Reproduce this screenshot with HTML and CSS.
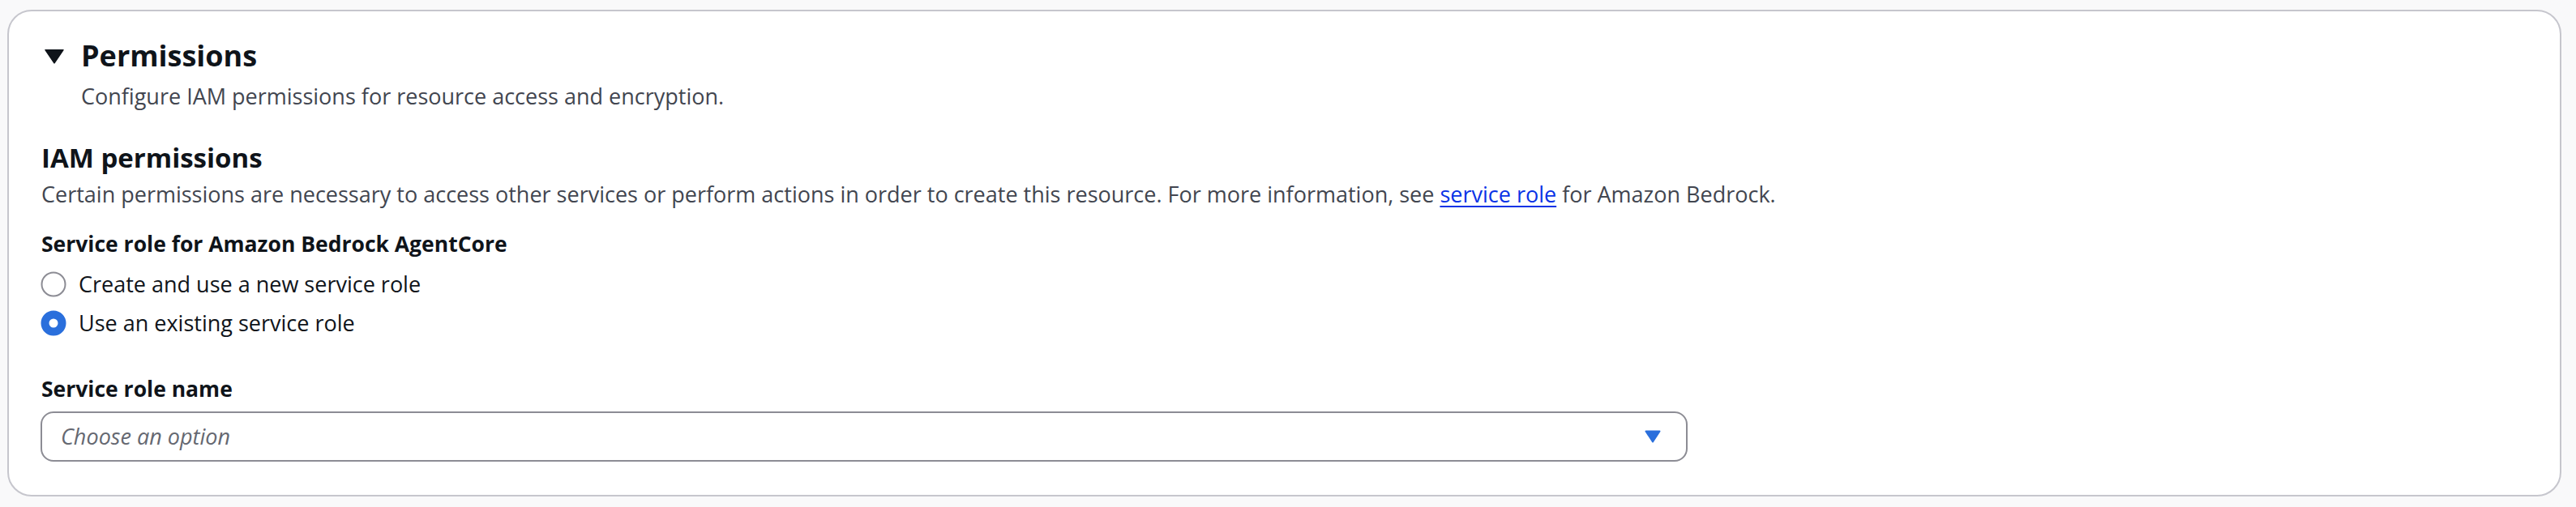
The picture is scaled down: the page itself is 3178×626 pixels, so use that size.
FILE: index.html
```html
<!DOCTYPE html>
<html lang="en">
<head>
<meta charset="utf-8">
<title>Permissions</title>
<link rel="stylesheet" href="styles.css">
</head>
<body>
  <section class="container">
    <div class="header">
      <div class="header-row">
        <span class="expand-icon">
          <svg width="32" height="32" viewBox="0 0 32 32" aria-hidden="true">
            <path d="M5 13 H27 L16 31 Z" transform="translate(0,-3) scale(1,0.9)" fill="#0f141a" stroke="#0f141a" stroke-width="1.5" stroke-linejoin="round"/>
          </svg>
        </span>
        <h2 class="header-title">Permissions</h2>
      </div>
      <p class="header-desc">Configure IAM permissions for resource access and encryption.</p>
    </div>

    <div class="content">
      <h3 class="section-title">IAM permissions</h3>
      <p class="section-desc">Certain permissions are necessary to access other services or perform actions in order to create this resource. For more information, see <a class="link" href="#">service role</a> for Amazon Bedrock.</p>

      <div class="field field-radio">
        <div class="field-label">Service role for Amazon Bedrock AgentCore</div>
        <div class="radio-group">
          <label class="radio">
            <span class="radio-control">
              <svg width="32" height="32" viewBox="0 0 32 32" aria-hidden="true">
                <circle cx="16" cy="16" r="14.5" fill="#ffffff" stroke="#8c8c94" stroke-width="2"/>
              </svg>
            </span>
            <span class="radio-label">Create and use a new service role</span>
          </label>
          <label class="radio">
            <span class="radio-control">
              <svg width="32" height="32" viewBox="0 0 32 32" aria-hidden="true">
                <circle cx="16" cy="16" r="10.5" fill="#ffffff" stroke="#2a6fdc" stroke-width="10"/>
              </svg>
            </span>
            <span class="radio-label">Use an existing service role</span>
          </label>
        </div>
      </div>

      <div class="field field-select">
        <div class="field-label">Service role name</div>
        <div class="select">
          <span class="select-placeholder">Choose an option</span>
          <svg class="select-caret" width="20" height="16" viewBox="0 0 20 16" aria-hidden="true">
            <path d="M1.5 1.5 H18.5 L10 14.5 Z" fill="#2a6fdc" stroke="#2a6fdc" stroke-width="2" stroke-linejoin="round"/>
          </svg>
        </div>
      </div>
    </div>
  </section>
</body>
</html>
```

FILE: styles.css
```css
* {
  box-sizing: border-box;
}

html,
body {
  margin: 0;
  background: #f9f9fa;
}

body {
  padding: 12px 18px 13px 9px;
  font-family: "Open Sans", "Noto Sans", sans-serif;
  color: #0f141a;
}

/* Outer container card */
.container {
  background: #ffffff;
  border: 2px solid #c6c6cd;
  border-radius: 30px;
  padding: 33px 40px 41px 40px;
}

/* Expandable header */
.header-row {
  display: flex;
  align-items: center;
  gap: 17px;
}

.expand-icon {
  display: flex;
  width: 32px;
  height: 44px;
  align-items: center;
  justify-content: center;
}

.header-title {
  margin: 0;
  font-size: 36px;
  line-height: 44px;
  font-weight: 700;
  color: #0f141a;
}

.header-desc {
  margin: 8px 0 0 49px;
  font-size: 27px;
  line-height: 40px;
  color: #424650;
}

/* Section body */
.section-title {
  margin: 36px 0 0 0;
  font-size: 33px;
  line-height: 40px;
  font-weight: 700;
  color: #0f141a;
}

.section-desc {
  margin: 5px 0 0 0;
  font-size: 27px;
  line-height: 40px;
  color: #424650;
}

.link {
  color: #0a33e6;
  text-decoration: underline;
  text-decoration-thickness: 2px;
  text-underline-offset: 4px;
}

.field-label {
  font-size: 26.5px;
  line-height: 40px;
  font-weight: 700;
  color: #0f141a;
}

.field-radio {
  margin-top: 21px;
}

.radio-group {
  margin-top: 6px;
  display: flex;
  flex-direction: column;
}

.radio {
  display: flex;
  align-items: center;
  gap: 15px;
  height: 48px;
  cursor: pointer;
}

.radio-control {
  display: flex;
  width: 32px;
  height: 32px;
  margin-left: -1px;
}

.radio-label {
  font-size: 27px;
  line-height: 40px;
  color: #0f141a;
}

/* Select */
.field-select {
  margin-top: 37px;
}

.select {
  margin-top: 8px;
  margin-left: -1px;
  width: 2032px;
  height: 62px;
  border: 2px solid #8c8c94;
  border-radius: 16px;
  display: flex;
  align-items: center;
  justify-content: space-between;
  padding: 0 31px 0 23px;
  background: #ffffff;
}

.select-placeholder {
  font-size: 27px;
  line-height: 40px;
  font-style: italic;
  color: #656871;
}

.select-caret {
  display: block;
}
```
